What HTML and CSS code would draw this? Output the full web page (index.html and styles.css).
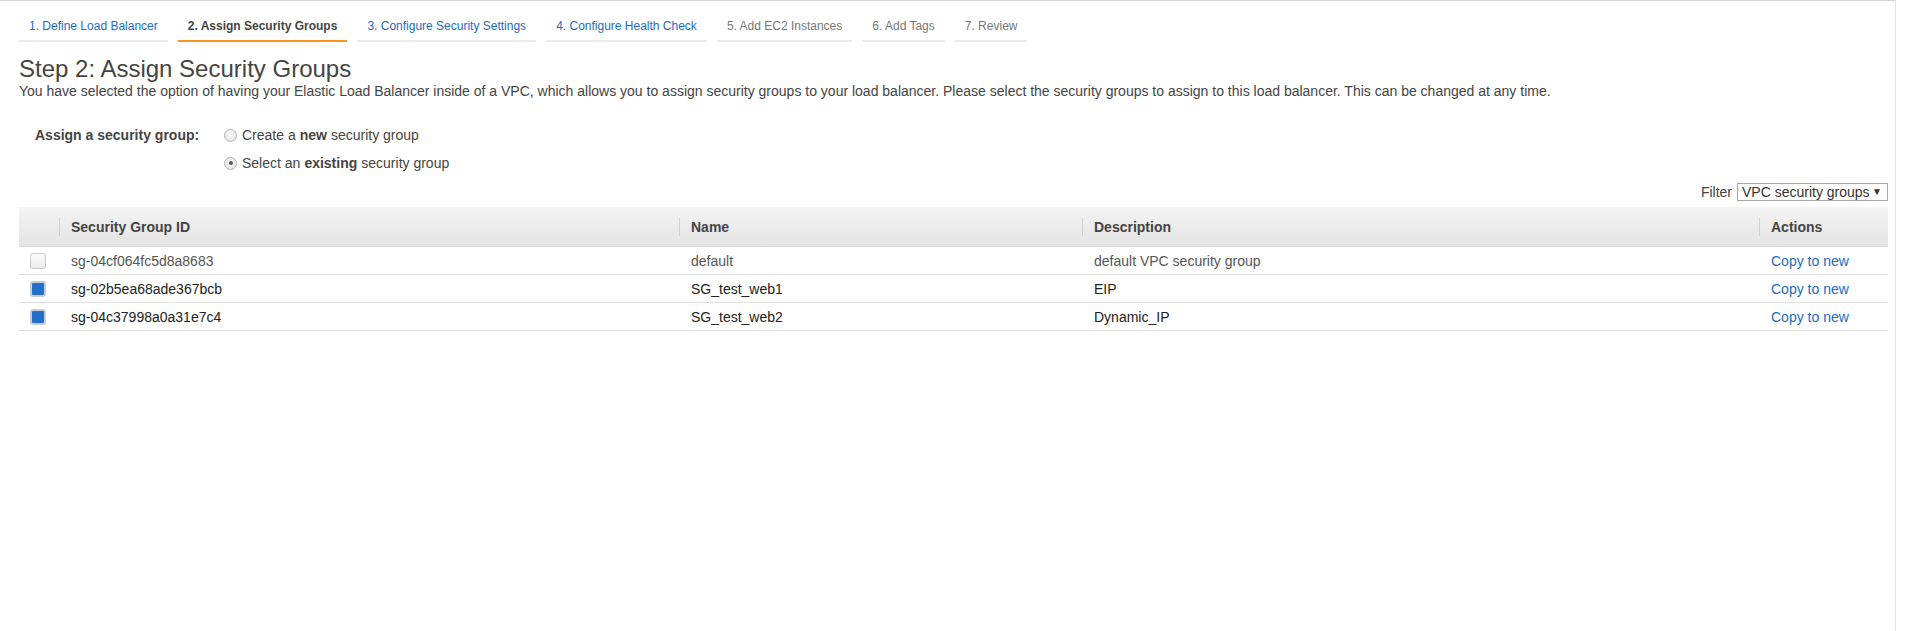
FILE: index.html
```html
<!DOCTYPE html>
<html>
<head>
<meta charset="utf-8">
<link rel="stylesheet" href="styles.css">
</head>
<body>
<div class="page">
  <nav class="tabs">
    <a class="tab tab-link">1. Define Load Balancer</a>
    <a class="tab tab-active">2. Assign Security Groups</a>
    <a class="tab tab-link">3. Configure Security Settings</a>
    <a class="tab tab-link">4. Configure Health Check</a>
    <a class="tab tab-off">5. Add EC2 Instances</a>
    <a class="tab tab-off">6. Add Tags</a>
    <a class="tab tab-off">7. Review</a>
  </nav>

  <h1 class="title">Step 2: Assign Security Groups</h1>
  <p class="intro">You have selected the option of having your Elastic Load Balancer inside of a VPC, which allows you to assign security groups to your load balancer. Please select the security groups to assign to this load balancer. This can be changed at any time.</p>

  <div class="assign">
    <div class="assign-label">Assign a security group:</div>
    <div class="options">
      <label class="option"><span class="radio"></span>Create a <b>new</b> security group</label>
      <label class="option"><span class="radio radio-on"></span>Select an <b>existing</b> security group</label>
    </div>
  </div>

  <div class="filter">
    <span class="filter-label">Filter</span>
    <div class="select"><span>VPC security groups</span><span class="caret">&#9660;</span></div>
  </div>

  <div class="grid">
    <div class="row head">
      <div class="cell"></div>
      <div class="cell"><span class="hcol">Security Group ID</span></div>
      <div class="cell"><span class="hcol">Name</span></div>
      <div class="cell"><span class="hcol">Description</span></div>
      <div class="cell"><span class="hcol">Actions</span></div>
    </div>
    <div class="row dim">
      <div class="cell chk"><span class="box"></span></div>
      <div class="cell txt">sg-04cf064fc5d8a8683</div>
      <div class="cell txt">default</div>
      <div class="cell txt">default VPC security group</div>
      <div class="cell txt"><a class="link">Copy to new</a></div>
    </div>
    <div class="row sel">
      <div class="cell chk"><span class="box box-on"></span></div>
      <div class="cell txt">sg-02b5ea68ade367bcb</div>
      <div class="cell txt">SG_test_web1</div>
      <div class="cell txt">EIP</div>
      <div class="cell txt"><a class="link">Copy to new</a></div>
    </div>
    <div class="row sel">
      <div class="cell chk"><span class="box box-on"></span></div>
      <div class="cell txt">sg-04c37998a0a31e7c4</div>
      <div class="cell txt">SG_test_web2</div>
      <div class="cell txt">Dynamic_IP</div>
      <div class="cell txt"><a class="link">Copy to new</a></div>
    </div>
  </div>
</div>
</body>
</html>
```

FILE: styles.css
```css
html, body {
  margin: 0;
  padding: 0;
  background: #fff;
}
body {
  font-family: "Liberation Sans", Arial, sans-serif;
  color: #444;
}
.page {
  box-sizing: border-box;
  width: 1896px;
  min-height: 631px;
  border-top: 1px solid #d5d5d5;
  border-right: 1px solid #e6e6e6;
  padding: 0 7px 0 19px;
}
.tabs {
  display: flex;
  gap: 10px;
  padding-top: 18px;
}
.tab {
  font-size: 12px;
  line-height: 14px;
  padding: 0 10px 7px;
  border-bottom: 2px solid #eaeaea;
  white-space: nowrap;
}
.tab-link { color: #1b6cbf; }
.tab-active { color: #444; font-weight: bold; border-bottom-color: #f7931e; }
.tab-off { color: #777; }

.title {
  margin: 13px 0 0;
  font-size: 24px;
  line-height: 28px;
  font-weight: normal;
  color: #444;
}
.intro {
  margin: 0;
  font-size: 14px;
  line-height: 16px;
  color: #444;
}

.assign {
  display: flex;
  margin-top: 22px;
  font-size: 14px;
}
.assign-label {
  width: 189px;
  padding-left: 16px;
  font-weight: bold;
  line-height: 28px;
  color: #444;
}
.options {
  display: flex;
  flex-direction: column;
}
.option {
  display: flex;
  align-items: center;
  height: 28px;
  color: #444;
}
.option b { margin: 0 4px; }
.radio {
  box-sizing: border-box;
  width: 13px;
  height: 13px;
  border-radius: 50%;
  border: 1px solid #b4b4b4;
  background: radial-gradient(circle at 50% 40%, #fafafa 0, #e0e0e0 100%);
  margin-right: 5px;
  position: relative;
}
.radio-on::after {
  content: "";
  position: absolute;
  left: 3.5px;
  top: 3.5px;
  width: 4px;
  height: 4px;
  border-radius: 50%;
  background: #555;
}

.filter {
  display: flex;
  justify-content: flex-end;
  align-items: center;
  margin-top: 6px;
  font-size: 14px;
  color: #444;
}
.filter-label { margin-right: 5px; }
.select {
  box-sizing: border-box;
  display: flex;
  align-items: center;
  justify-content: space-between;
  width: 151px;
  height: 18px;
  padding: 0 5px 0 4px;
  border: 1px solid #a6a6a6;
  color: #333;
  line-height: 16px;
}
.caret { font-size: 10px; color: #333; }

.grid {
  margin-top: 6px;
  font-size: 14px;
}
.row {
  display: grid;
  grid-template-columns: 40px 620px 403px 677px 1fr;
  box-sizing: border-box;
  height: 28px;
  border-bottom: 1px solid #e1e1e1;
  align-items: center;
}
.row.head {
  height: 40px;
  background: linear-gradient(#f3f3f3, #e4e4e4);
  border-bottom: 1px solid #dadada;
}
.hcol {
  display: block;
  border-left: 1px solid #cfcfcf;
  padding-left: 11px;
  line-height: 18px;
  font-weight: bold;
  color: #444;
}
.txt { padding-left: 12px; white-space: nowrap; }
.dim .txt { color: #555; }
.sel .txt { color: #222; }
.chk { padding-left: 11px; display: flex; align-items: center; }
.box {
  box-sizing: border-box;
  width: 16px;
  height: 16px;
  border-radius: 3px;
  border: 1px solid #c9c9c9;
  background: linear-gradient(#fbfbfb, #ececec);
}
.box-on {
  border: 2px solid #c5cdd8;
  background: #2470c8;
}
.link { color: #1b6cbf; }
```
